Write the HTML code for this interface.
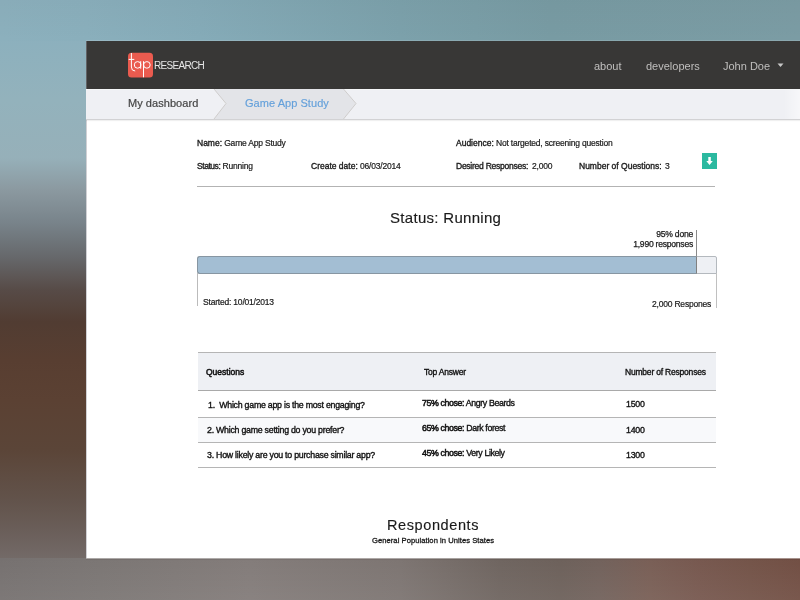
<!DOCTYPE html>
<html><head><meta charset="utf-8">
<style>
*{margin:0;padding:0;box-sizing:border-box}
html,body{width:800px;height:600px;overflow:hidden}
body{position:relative;font-family:"Liberation Sans",sans-serif;color:#333;
background:
 linear-gradient(180deg,#88afbe 0px,#93b2bc 100px,#96b0b9 158px,#8b99a0 190px,#78838a 223px,#66686b 257px,#574b47 290px,#513c32 322px,#583e31 360px,#5b4133 400px,#5b4538 450px,#62534b 500px,#6a5e59 530px,#736a67 558px,#7f7b7a 600px);
}
.t{position:absolute;white-space:nowrap;line-height:1;will-change:transform}
.s{font-size:8.5px;color:#1a1a1a;-webkit-text-stroke:0.2px #1a1a1a;letter-spacing:-0.2px}
.s b{font-weight:normal;-webkit-text-stroke:0.35px #1a1a1a;letter-spacing:0}
.r{font-size:8.8px;letter-spacing:-0.25px;color:#111;-webkit-text-stroke:0.35px #111}
.r b{-webkit-text-stroke:0.5px #111;letter-spacing:inherit}
#panel{position:absolute;left:86px;top:41px;width:714px;height:517px;background:#fff;overflow:hidden;box-shadow:0 1px 0 rgba(255,255,255,0.4),0 2px 0 rgba(40,25,20,0.08),0 -1px 0 rgba(255,255,255,0.12)}
#nav{position:absolute;left:0;top:0;width:714px;height:48px;background:#383736}
#crumb{position:absolute;left:0;top:48px;width:714px;height:31px;background:linear-gradient(90deg,rgba(255,255,255,0) 698px,rgba(255,255,255,0.5) 714px),#eff0f4;border-top:1px solid #f6f7f9;border-bottom:1px solid #d2d2d4;box-shadow:0 1px 1px rgba(0,0,0,0.06)}
</style></head><body>
<div style="position:absolute;left:0;top:0;width:800px;height:41px;background:linear-gradient(180deg,rgba(0,0,0,0.025),rgba(0,0,0,0)),linear-gradient(90deg,#8cb0bd 0,#8aafbc 86px,#85abb8 200px,#7ca1ab 400px,#789ba3 550px,#7b9ca4 800px)"></div>
<div style="position:absolute;left:0;top:558px;width:800px;height:42px;background:linear-gradient(180deg,rgba(255,255,255,0),rgba(255,255,255,0.05)),linear-gradient(90deg,#767170 0,#7b7674 100px,#837c7a 250px,#7d7572 400px,#6f6560 500px,#6d615b 560px,#72625c 600px,#795f56 650px,#77584f 700px,#745449 750px,#724f44 800px)"></div>
<div id="panel">
 <div id="nav"></div>
 <div style="position:absolute;left:0;top:0;width:1px;height:517px;background:rgba(150,150,160,0.45)"></div>
 <div id="crumb">
  <svg width="714" height="30" style="position:absolute;left:0;top:-1px">
   <polygon points="128,0 140,14.5 128,30 257.5,30 270,14.5 257.5,0" fill="#e3e4e8"/>
   <polyline points="128,0 140,14.5 128,30" fill="none" stroke="#cfcdcc" stroke-width="1"/>
   <polyline points="257.5,0 270,14.5 257.5,30" fill="none" stroke="#cfcdcc" stroke-width="1"/>
  </svg>
 </div>
</div>

<!-- logo -->
<svg style="position:absolute;left:128px;top:52px" width="26" height="27" viewBox="0 0 26 27">
 <rect x="0" y="0.8" width="25" height="24.6" rx="3.5" fill="#ea5b4f"/>
 <g fill="none" stroke="#fff" stroke-width="1">
 <path d="M3.4 1 V15 Q3.4 19 7.2 19"/>
 <path d="M0.7 7.4 H6.3"/>
 <circle cx="9.6" cy="12.9" r="3.3"/>
 <path d="M12.7 9.2 V16.7"/>
 <path d="M15.5 9.2 V25.3"/>
 <circle cx="18.9" cy="12.9" r="3.3"/>
 </g>
</svg>
<div class="t" style="left:154px;top:61px;font-size:10px;color:#e6e6e6;letter-spacing:-0.7px">RESEARCH</div>

<div class="t" style="left:594px;top:60.5px;font-size:11px;color:#c0bfbe">about</div>
<div class="t" style="left:646px;top:60.5px;font-size:11px;color:#c0bfbe">developers</div>
<div class="t" style="left:723px;top:60.5px;font-size:11px;color:#c0bfbe">John Doe</div>
<svg style="position:absolute;left:777px;top:63px" width="8" height="5"><polygon points="0.5,0.5 6.5,0.5 3.5,4" fill="#c8c8c8"/></svg>

<div class="t" style="left:127.5px;top:98px;font-size:11px;color:#444;-webkit-text-stroke:0.2px #444;letter-spacing:0.05px">My dashboard</div>
<div class="t" style="left:245px;top:98px;font-size:11px;color:#64a0da;-webkit-text-stroke:0.15px #64a0da;letter-spacing:0.05px">Game App Study</div>

<!-- info -->
<div class="t s" style="left:197px;top:139px"><b>Name:</b> Game App Study</div>
<div class="t s" style="left:197px;top:162px"><b style="letter-spacing:-0.45px">Status:</b> Running</div>
<div class="t s" style="left:311px;top:162px"><b>Create date:</b> 06/03/2014</div>
<div class="t s" style="left:456px;top:139px"><b>Audience:</b> Not targeted, screening question</div>
<div class="t s" style="left:456px;top:162px"><b style="letter-spacing:-0.25px">Desired Responses:</b></div>
<div class="t s" style="left:531.5px;top:162px">2,000</div>
<div class="t s" style="left:579px;top:162px"><b>Number of Questions:</b></div>
<div class="t s" style="left:664.5px;top:162px">3</div>
<svg style="position:absolute;left:702px;top:153px" width="15" height="16">
 <rect x="0" y="0" width="15" height="16" fill="#2bb9a0"/>
 <path d="M6.3 4 H8.8 V8 H10.8 L7.55 12 L4.3 8 H6.3 Z" fill="#fff"/>
</svg>
<div style="position:absolute;left:197px;top:186px;width:518px;height:1px;background:#b3b3b3"></div>

<div class="t" style="left:390px;top:210.4px;font-size:15px;letter-spacing:0.3px;color:#1a1a1a;-webkit-text-stroke:0.15px #1a1a1a">Status: Running</div>
<div class="t" style="left:593px;top:229px;width:100px;text-align:right;font-size:8.6px;line-height:10px;letter-spacing:-0.25px;color:#1a1a1a;-webkit-text-stroke:0.25px #1a1a1a">95% done<br>1,990 responses</div>
<div style="position:absolute;left:696px;top:230px;width:1px;height:27px;background:#8a8a8a"></div>
<div style="position:absolute;left:197px;top:256px;width:520px;height:18px;background:#eef0f4;border:1px solid #b4b9be;border-radius:3px 2px 0 3px"></div>
<div style="position:absolute;left:197px;top:256px;width:500px;height:18px;background:#a3bed3;border:1px solid #8796a2;border-right:1px solid #808080;border-radius:3px 0 0 3px"></div>
<div style="position:absolute;left:197px;top:273px;width:1px;height:33px;background:#bbb"></div>
<div style="position:absolute;left:716px;top:273px;width:1px;height:35px;background:#c0c0c0"></div>
<div class="t s" style="left:203px;top:298px">Started: 10/01/2013</div>
<div class="t s" style="left:652px;top:300px">2,000 Respones</div>

<!-- table -->
<div style="position:absolute;left:198px;top:352px;width:518px;height:39px;background:#eef0f4;border-top:1px solid #b5b5b5;border-bottom:1px solid #a9a9a9"></div>
<div style="position:absolute;left:198px;top:417px;width:518px;height:26px;background:#f8f9fb;border-top:1px solid #b5b5b5;border-bottom:1px solid #b5b5b5"></div>
<div style="position:absolute;left:198px;top:467px;width:518px;height:1px;background:#b5b5b5"></div>
<div class="t s" style="left:206px;top:368px"><b style="-webkit-text-stroke:0.5px #111;color:#111">Questions</b></div>
<div class="t s" style="left:424px;top:368px;-webkit-text-stroke:0.35px #111;color:#111">Top Answer</div>
<div class="t s" style="left:625px;top:368px;-webkit-text-stroke:0.35px #111;color:#111">Number of Responses</div>

<div class="t s r" style="left:208px;top:400.5px">1.&nbsp; Which game app is the most engaging?</div>
<div class="t s r" style="left:207px;top:425.5px">2. Which game setting do you prefer?</div>
<div class="t s r" style="left:207px;top:450.7px">3. How likely are you to purchase similar app?</div>
<div class="t s r" style="left:422px;top:399px;letter-spacing:-0.38px"><b>75% chose:</b> Angry Beards</div>
<div class="t s r" style="left:422px;top:424px;letter-spacing:-0.38px"><b>65% chose:</b> Dark forest</div>
<div class="t s r" style="left:422px;top:449px;letter-spacing:-0.38px"><b>45% chose:</b> Very Likely</div>
<div class="t s r" style="left:626px;top:400px">1500</div>
<div class="t s r" style="left:626px;top:426.2px">1400</div>
<div class="t s r" style="left:626px;top:451px">1300</div>

<div class="t" style="left:386.8px;top:517.6px;font-size:14.5px;letter-spacing:0.6px;color:#1a1a1a;-webkit-text-stroke:0.15px #1a1a1a">Respondents</div>
<div class="t" style="left:372px;top:536.5px;font-size:7.6px;letter-spacing:0.05px;color:#1a1a1a;-webkit-text-stroke:0.3px #1a1a1a">General Population in Unites States</div>
</body></html>
